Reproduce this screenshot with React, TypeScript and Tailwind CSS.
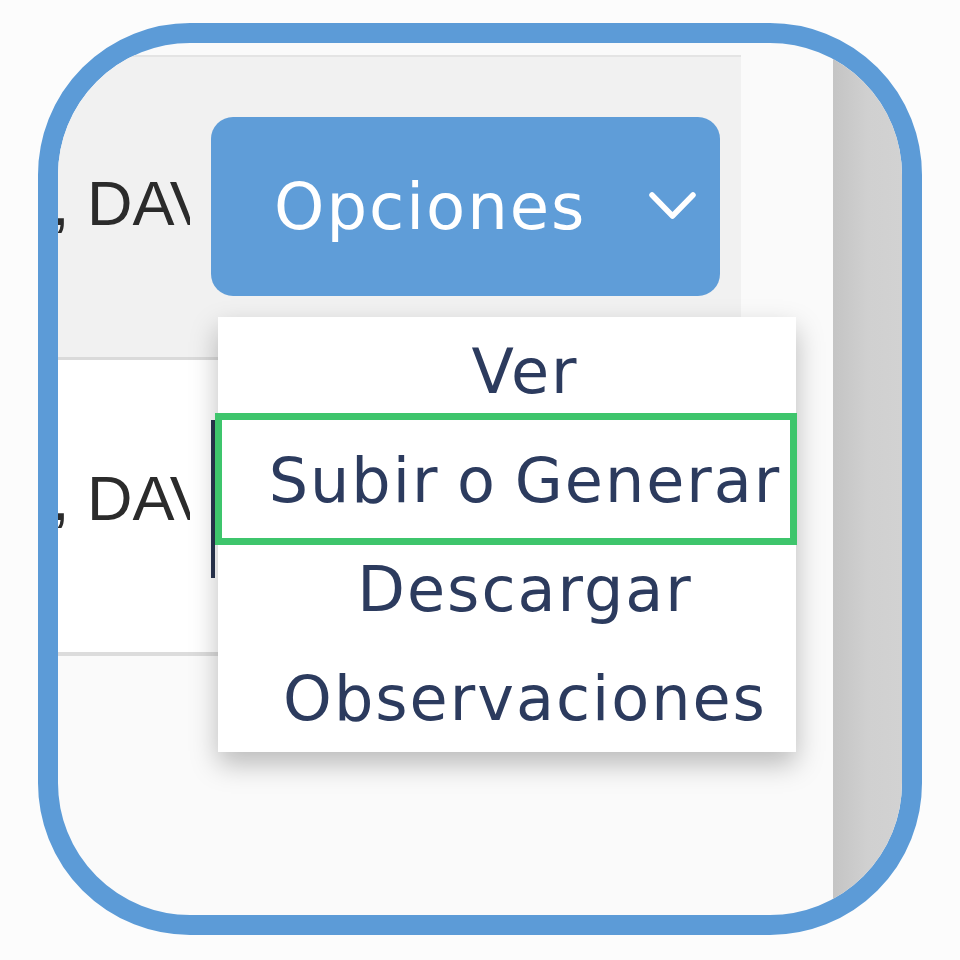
import React from "react";

export default function App() {
  const item =
    "h-[109px] flex items-center justify-center pl-[36px] whitespace-nowrap text-[62px] leading-[109px] tracking-[2px] text-[#2c3b5e]";
  return (
    <div className="w-[960px] h-[960px] bg-[#fcfcfc] pt-[23px] pl-[38px]" style={{ fontFamily: '"DejaVu Sans", sans-serif' }}>
      <div className="w-[884px] h-[912px] border-[20px] border-[#5c9bd7] rounded-[152px] overflow-hidden bg-[#fafafa] flex">
        {/* main content column */}
        <div className="w-[775px] pt-[12px]">
          <div className="w-[683px] border-t-2 border-[#e4e4e4]">
            {/* Row 1 */}
            <div className="h-[303px] bg-[#f1f1f1] border-b-[3px] border-[#dadada] flex items-start">
              <div
                className="w-[132px] overflow-hidden whitespace-nowrap mt-[115px] text-[63px] leading-none text-[#2b2b2b]"
                style={{ fontFamily: '"Liberation Sans", Arial, sans-serif' }}
              >
                <span className="ml-[-6px]">, DAVID</span>
              </div>
              <div className="relative ml-[21px] mt-[60px]">
                <div className="w-[509px] h-[179px] rounded-[22px] bg-[#5f9dd8] flex items-center pl-[63px] pr-[22px]">
                  <span className="text-[64px] tracking-[2px] text-white leading-none">Opciones</span>
                  <svg className="ml-auto" width="51" height="33" viewBox="0 0 51 33" fill="none">
                    <path d="M5 5 L25.5 26 L46 5" stroke="#ffffff" strokeWidth="5.5" strokeLinecap="round" strokeLinejoin="round" />
                  </svg>
                </div>
                {/* dropdown menu */}
                <div className="absolute left-[7px] top-[200px] w-[578px] h-[435px] bg-white shadow-[0_12px_26px_rgba(0,0,0,0.26)] z-10">
                  <div className={item}>Ver</div>
                  <div className={item + " tracking-[-0.5px] [word-spacing:-4px]"}>Subir o Generar</div>
                  <div className={item}>Descargar</div>
                  <div className={item}>Observaciones</div>
                  <div className="absolute left-[-3px] top-[96px] w-[582px] h-[132px] border-[7px] border-[#3ec56c]" />
                </div>
              </div>
            </div>
            {/* Row 2 */}
            <div className="h-[296px] bg-white border-b-4 border-[#dcdcdc] flex items-start">
              <div
                className="w-[132px] overflow-hidden whitespace-nowrap mt-[107px] text-[63px] leading-none text-[#2b2b2b]"
                style={{ fontFamily: '"Liberation Sans", Arial, sans-serif' }}
              >
                <span className="ml-[-6px]">, DAVID</span>
              </div>
              <div className="ml-[21px] mt-[60px] w-[200px] h-[158px] border-l-4 border-[#2a3550]" />
            </div>
          </div>
        </div>
        {/* right gray strip */}
        <div className="flex-1 bg-gradient-to-r from-[#c4c4c4] via-[#d0d0d0] to-[#d2d2d2]" />
      </div>
    </div>
  );
}
